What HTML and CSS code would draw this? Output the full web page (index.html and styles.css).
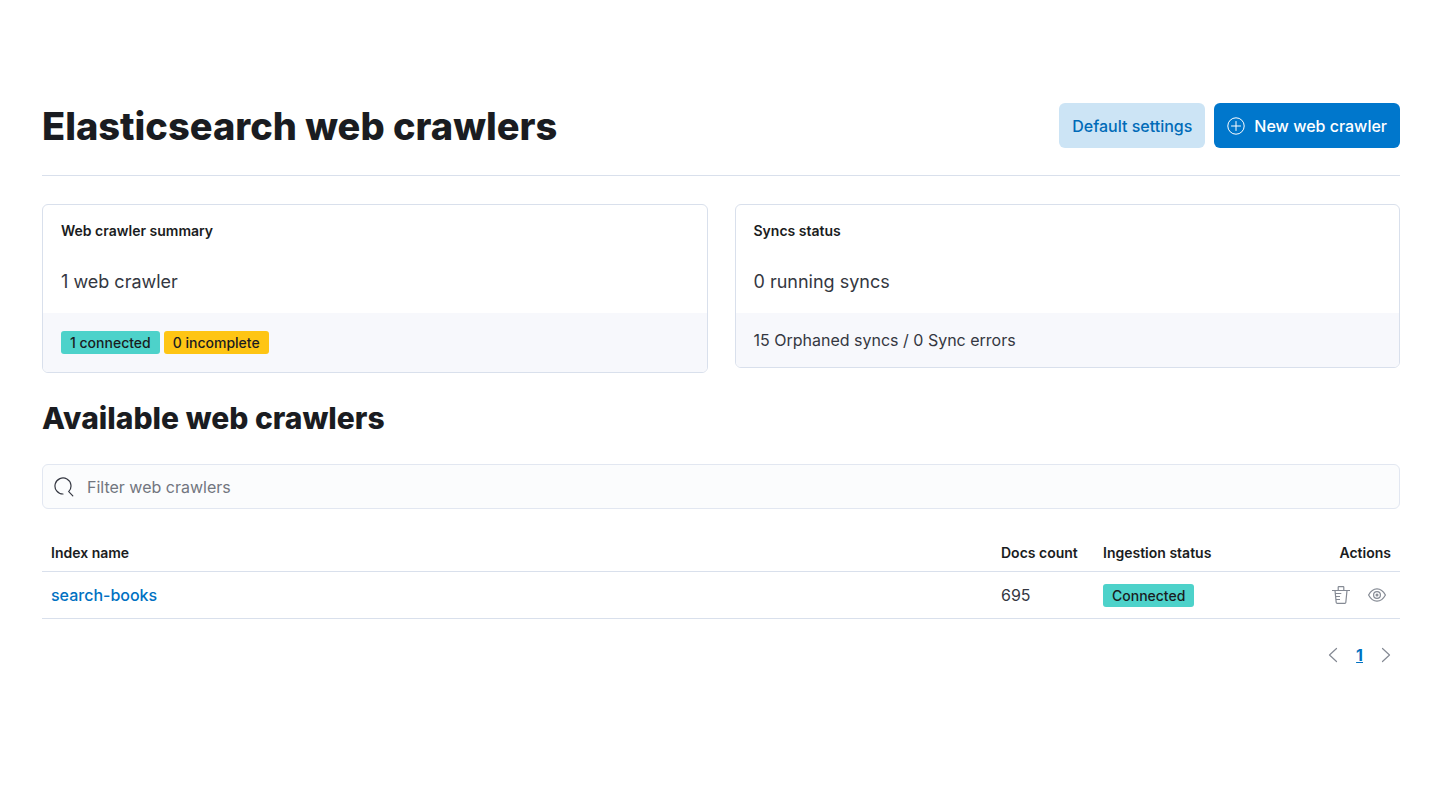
FILE: index.html
```html
<!DOCTYPE html>
<html lang="en">
<head>
    <meta charset="UTF-8">
    <meta name="viewport" content="width=device-width, initial-scale=1.0">
    <title>Elasticsearch web crawlers</title>
    <link rel="stylesheet" href="styles.css">
</head>
<body>
    <main class="page">
        <header class="page-header">
            <h1>Elasticsearch web crawlers</h1>
            <div class="header-actions">
                <button type="button" class="btn btn-light">Default settings</button>
                <button type="button" class="btn btn-fill">
                    <svg width="18" height="18" viewBox="0 0 18 18" fill="none" stroke="currentColor" aria-hidden="true">
                        <circle cx="9" cy="9" r="8.2"/>
                        <path d="M9 4.5v9M4.5 9h9" stroke-linecap="round"/>
                    </svg>
                    New web crawler
                </button>
            </div>
        </header>

        <section class="stats">
            <div class="panel">
                <div class="panel-body">
                    <h3>Web crawler summary</h3>
                    <p>1 web crawler</p>
                </div>
                <div class="panel-footer">
                    <div class="badges">
                        <span class="badge badge-success">1 connected</span>
                        <span class="badge badge-warning">0 incomplete</span>
                    </div>
                </div>
            </div>
            <div class="panel">
                <div class="panel-body">
                    <h3>Syncs status</h3>
                    <p>0 running syncs</p>
                </div>
                <div class="panel-footer">
                    <p>15 Orphaned syncs / 0 Sync errors</p>
                </div>
            </div>
        </section>

        <h2>Available web crawlers</h2>

        <div class="search">
            <svg width="20" height="20" viewBox="0 0 20 20" fill="none" stroke="currentColor" stroke-width="1.2" stroke-linecap="round" aria-hidden="true">
                <path d="M9 17A8 8 0 1 1 14.700 14.600L18.800 18.800"/>
            </svg>
            <input type="search" placeholder="Filter web crawlers" aria-label="Filter web crawlers">
        </div>

        <table class="crawlers">
            <thead>
                <tr>
                    <th class="col-name">Index name</th>
                    <th class="col-docs">Docs count</th>
                    <th class="col-status">Ingestion status</th>
                    <th class="col-actions">Actions</th>
                </tr>
            </thead>
            <tbody>
                <tr>
                    <td><a href="#">search-books</a></td>
                    <td>695</td>
                    <td><span class="badge badge-success">Connected</span></td>
                    <td>
                        <div class="row-actions">
                            <button type="button" class="icon-btn" aria-label="Delete">
                                <svg width="18" height="18" viewBox="0 0 18 18" fill="none" stroke="currentColor" stroke-width="1.2" aria-hidden="true">
                                    <path d="M0 4.500h18M6.200 4.500V1.200q0-.6.600-.6h4.400q.6 0 .6.600v3.300M3 4.500l1.200 12q.1.900 1 .9h7.600q.9 0 1-.9l1.200-12M3.300 7.500h6M3.600 10.500h4.400M4 13.500h4"/>
                                </svg>
                            </button>
                            <button type="button" class="icon-btn" aria-label="View">
                                <svg width="18" height="18" viewBox="0 0 18 18" fill="none" stroke="currentColor" stroke-width="1.2" aria-hidden="true">
                                    <path d="M.6 9C2.600 5.200 5.500 2.800 9 2.800S15.400 5.200 17.400 9C15.400 12.800 12.500 15.200 9 15.200S2.600 12.800.6 9z"/>
                                    <circle cx="9" cy="9" r="3.400"/>
                                    <circle cx="9" cy="9" r=".9"/>
                                </svg>
                            </button>
                        </div>
                    </td>
                </tr>
            </tbody>
        </table>

        <nav class="pagination" aria-label="Pagination">
            <button type="button" class="icon-btn" aria-label="Previous page">
                <svg width="10" height="16" viewBox="0 0 10 16" fill="none" stroke="currentColor" stroke-width="1.2" stroke-linecap="round" stroke-linejoin="round" aria-hidden="true">
                    <path d="M8.500 1.500L1.500 8l7 6.500"/>
                </svg>
            </button>
            <a href="#" aria-current="page">1</a>
            <button type="button" class="icon-btn" aria-label="Next page">
                <svg width="10" height="16" viewBox="0 0 10 16" fill="none" stroke="currentColor" stroke-width="1.2" stroke-linecap="round" stroke-linejoin="round" aria-hidden="true">
                    <path d="M1.500 1.500L8.500 8l-7 6.500"/>
                </svg>
            </button>
        </nav>
    </main>
</body>
</html>
```
FILE: styles.css
```css
* {
    box-sizing: border-box;
}

body {
    margin: 0;
    background-color: #fff;
    color: #343741;
    font-family: Inter, sans-serif;
    font-size: 16px;
    line-height: 24px;
}

h1, h2, h3, p {
    margin: 0;
}

h1, h2, h3 {
    color: #1a1c21;
}

h1, h2 {
    font-weight: 800;
}

h1 {
    font-size: 38px;
    line-height: 44px;
}

h2 {
    margin: 26px 0 27px;
    font-size: 30px;
    line-height: 38px;
}

h3 {
    font-size: 14px;
    line-height: 20px;
    font-weight: 600;
}

a {
    color: #0071c2;
    font-weight: 500;
    text-decoration: none;
}

button {
    font-family: inherit;
    cursor: pointer;
}

.page {
    padding: 103px 40px 40px 42px;
}

.page-header {
    display: flex;
    justify-content: space-between;
    align-items: center;
    padding-bottom: 27px;
    border-bottom: 1px solid #d9e0ec;
}

.header-actions {
    display: flex;
    gap: 9px;
}

.btn {
    display: flex;
    align-items: center;
    gap: 9px;
    height: 45px;
    padding: 0 13px;
    border: none;
    border-radius: 6px;
    font-size: 16px;
    font-weight: 500;
}

.btn-light {
    background-color: #cce4f5;
    color: #006bb8;
}

.btn-fill {
    background-color: #0077cc;
    color: #fff;
}

.stats {
    display: grid;
    grid-template-columns: 1fr 1fr;
    align-items: start;
    gap: 27px;
    margin-top: 28px;
}

.panel {
    border: 1px solid #d9e0ec;
    border-radius: 6px;
    overflow: hidden;
}

.panel-body {
    padding: 16px 18px 19px;
}

.panel-body p {
    margin-top: 29px;
    font-size: 18px;
}

.panel-footer {
    padding: 15px 18px;
    background-color: #f7f8fc;
}

.badges {
    display: flex;
    gap: 4px;
    padding: 3px 0;
}

.badge {
    display: inline-block;
    padding: 0 9px;
    border-radius: 3px;
    color: #1a1c21;
    font-size: 14px;
    line-height: 23px;
    font-weight: 500;
}

.badge-success {
    background-color: #4dd2ca;
}

.badge-warning {
    background-color: #fec514;
}

.search {
    display: flex;
    align-items: center;
    gap: 13px;
    height: 45px;
    padding: 0 11px;
    border: 1px solid #e2e7f1;
    border-radius: 6px;
    background-color: #fbfcfd;
}

.search input {
    flex: 1;
    padding: 0;
    border: none;
    outline: none;
    background: none;
    color: #343741;
    font-family: inherit;
    font-size: 16px;
}

.search input::placeholder {
    color: #72767f;
}

.crawlers {
    width: 100%;
    margin-top: 26px;
    border-collapse: collapse;
    table-layout: fixed;
}

.crawlers th,
.crawlers td {
    padding: 0 9px;
    border-bottom: 1px solid #d9e0ec;
    text-align: left;
}

.crawlers th {
    height: 36px;
    color: #1a1c21;
    font-size: 14px;
    font-weight: 600;
}

.crawlers td {
    height: 47px;
}

.col-docs {
    width: 102px;
}

.col-status {
    width: 204px;
}

.crawlers .col-actions {
    width: 102px;
    text-align: right;
}

.row-actions,
.pagination {
    display: flex;
    justify-content: flex-end;
    align-items: center;
}

.row-actions {
    gap: 18px;
    padding-right: 5px;
}

.icon-btn {
    display: flex;
    padding: 0;
    border: none;
    background: none;
    color: #858a94;
}

.pagination {
    gap: 18px;
    margin-top: 24px;
    padding-right: 9px;
}

.pagination a {
    font-weight: 700;
    text-decoration: underline;
}
```
